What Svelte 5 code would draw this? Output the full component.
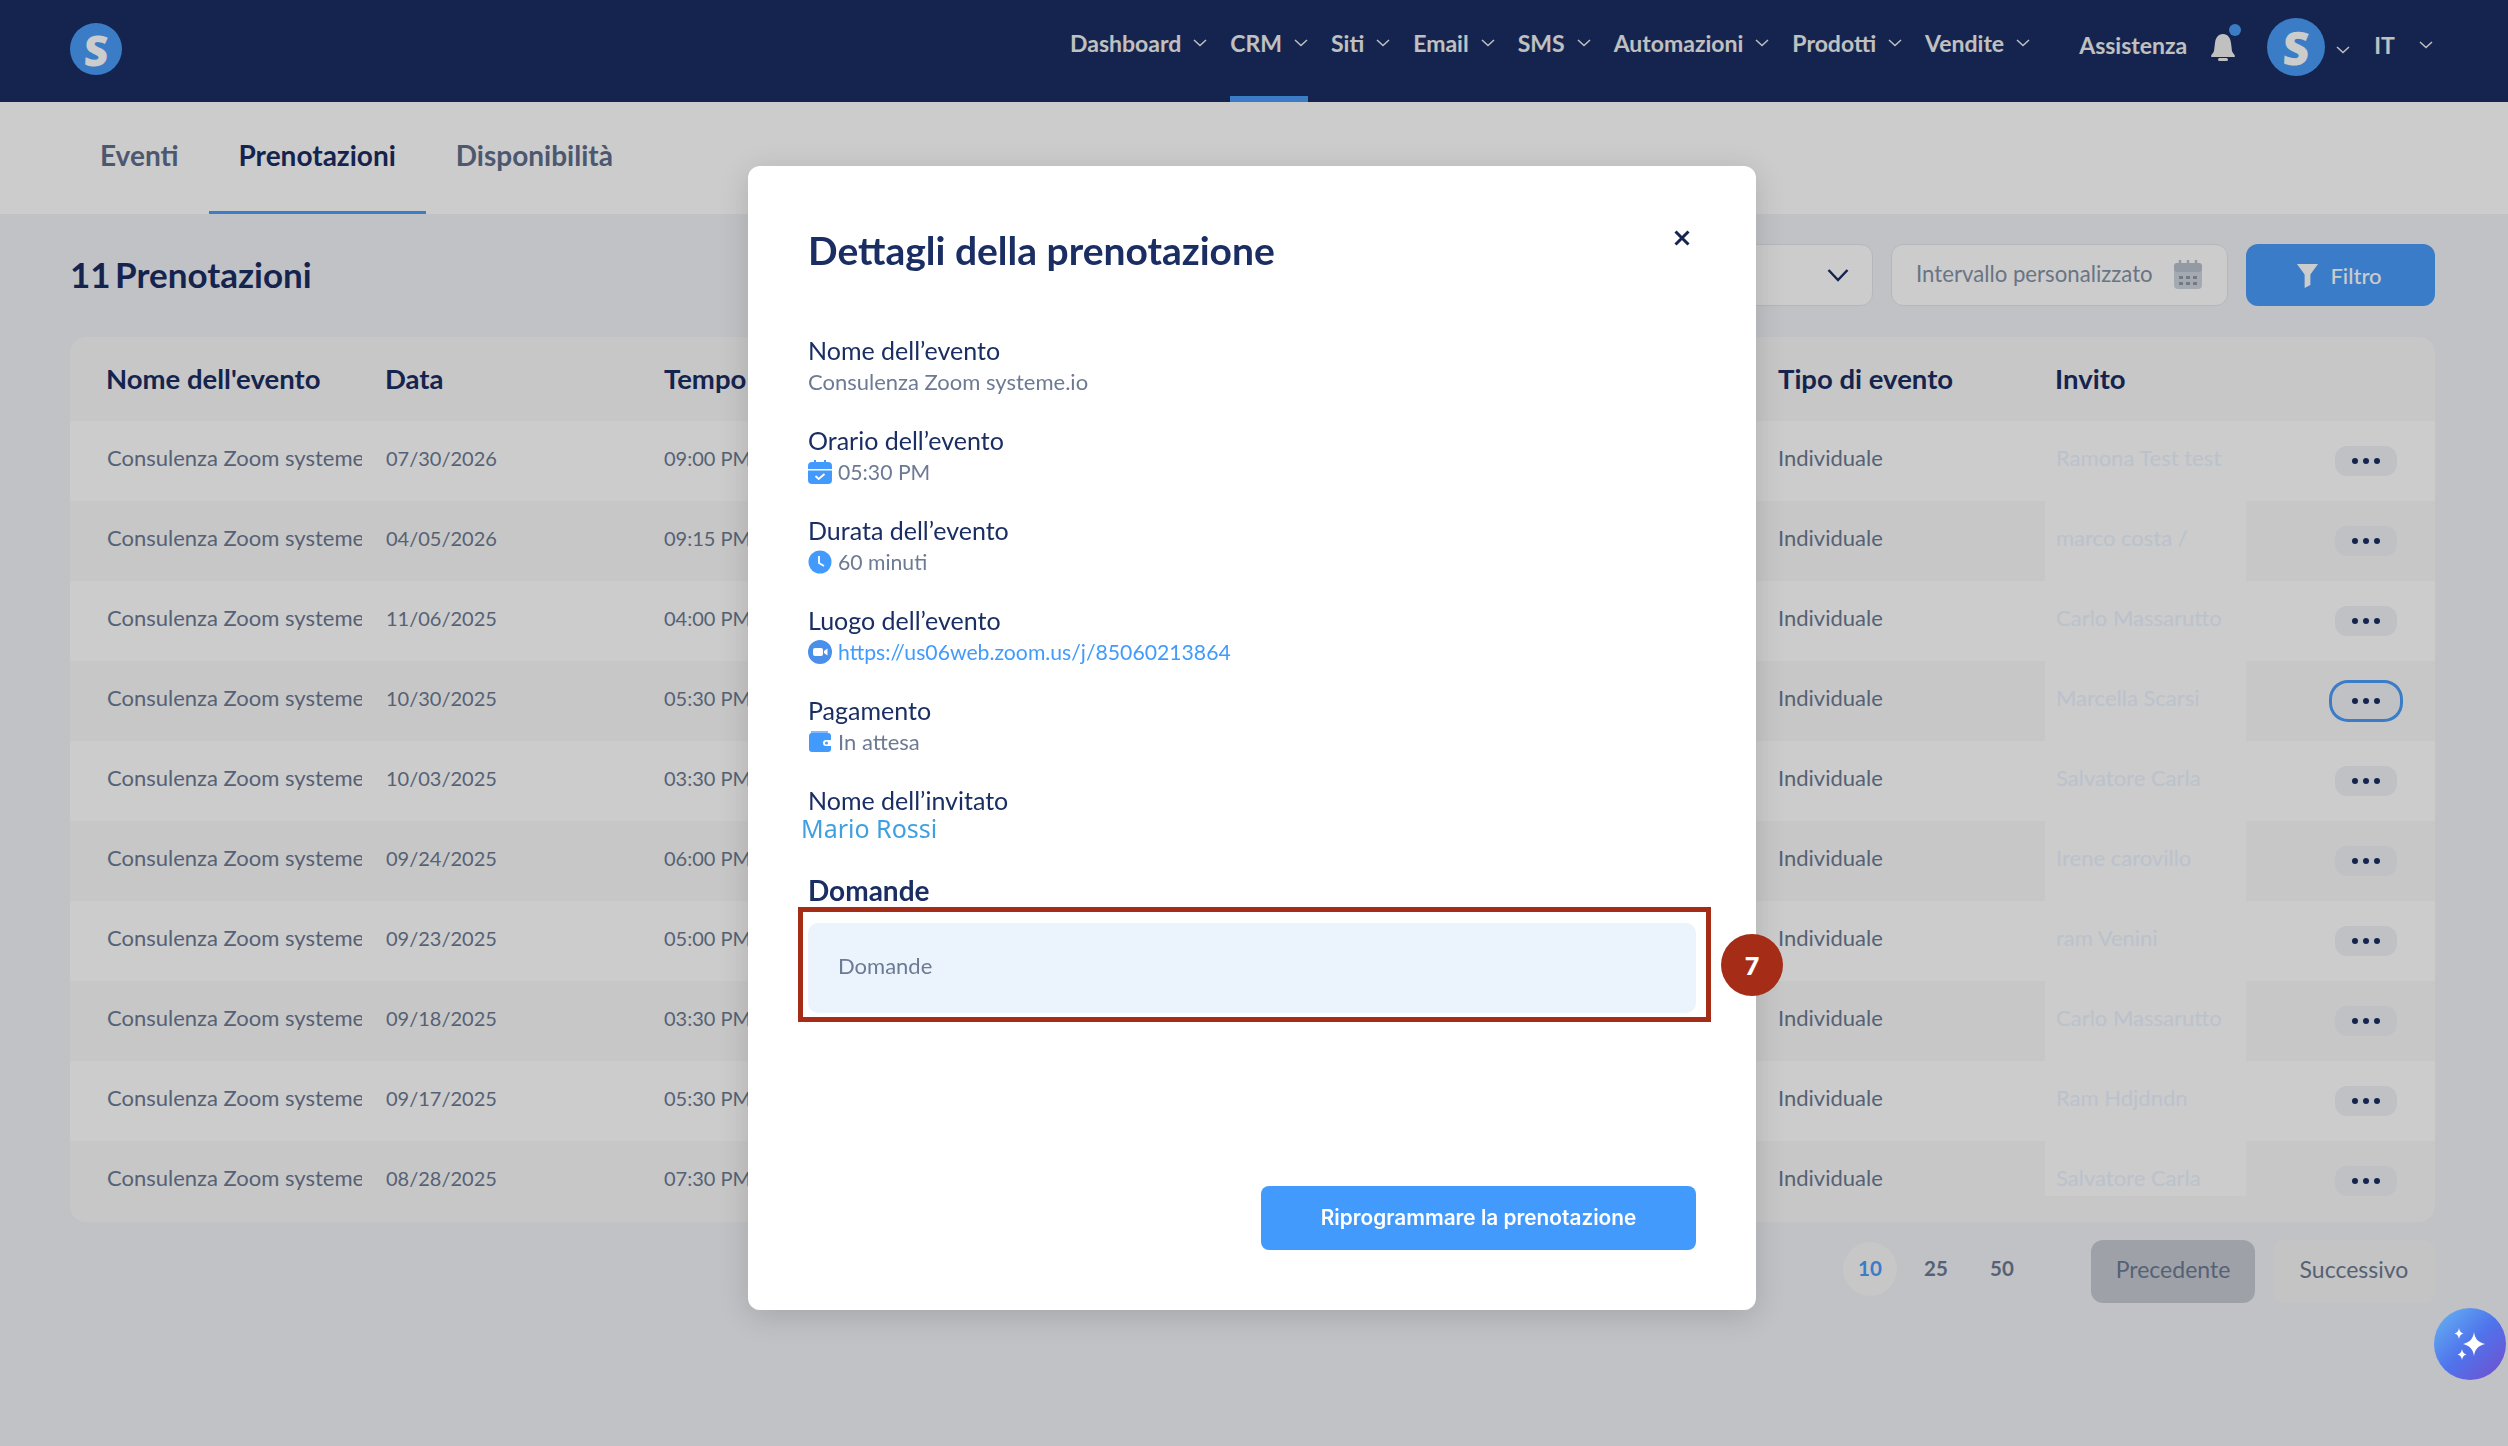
<script>
  const nav = ['Dashboard', 'CRM', 'Siti', 'Email', 'SMS', 'Automazioni', 'Prodotti', 'Vendite'];
  const rows = [
    ['07/30/2026', '09:00 PM', 'Ramona Test test'],
    ['04/05/2026', '09:15 PM', 'marco costa /'],
    ['11/06/2025', '04:00 PM', 'Carlo Massarutto'],
    ['10/30/2025', '05:30 PM', 'Marcella Scarsi'],
    ['10/03/2025', '03:30 PM', 'Salvatore Carla'],
    ['09/24/2025', '06:00 PM', 'Irene carovillo'],
    ['09/23/2025', '05:00 PM', 'ram Venini'],
    ['09/18/2025', '03:30 PM', 'Carlo Massarutto'],
    ['09/17/2025', '05:30 PM', 'Ram Hdjdndn'],
    ['08/28/2025', '07:30 PM', 'Salvatore Carla']
  ];
</script>

{#snippet chev()}
  <svg class="chev" viewBox="0 0 14 8" width="14" height="8"><path d="M1 1l6 5.5L13 1" fill="none" stroke="currentColor" stroke-width="1.5"/></svg>
{/snippet}

<div class="page">
  <header>
    <div class="logo"><span>S</span></div>
    <nav>
      {#each nav as item}
        <div class="nav-item" class:active={item === 'CRM'}>{item}{@render chev()}</div>
      {/each}
    </nav>
    <div class="help">Assistenza</div>
    <div class="bell">
      <svg viewBox="0 0 24 27" width="24" height="27"><path d="M12 0c5 0 7.500 4 8 9l1 8c.3 2 2.500 3 3 5 .2.800-.3 1-1 1H1c-.7 0-1.200-.2-1-1 .5-2 2.700-3 3-5l1-8c.5-5 3-9 8-9z" fill="#f0f0f0"/><rect x="7" y="24" width="10" height="3" rx="1.500" fill="#f0f0f0"/></svg>
      <i></i>
    </div>
    <div class="logo avatar"><span>S</span></div>
    <div class="chev-solo">{@render chev()}</div>
    <div class="lang">IT{@render chev()}</div>
  </header>

  <div class="tabs">
    <div class="tab">Eventi</div>
    <div class="tab current">Prenotazioni</div>
    <div class="tab">Disponibilità</div>
  </div>

  <main>
    <div class="toolbar">
      <h1>11 Prenotazioni</h1>
      <div class="filters">
        <div class="box select">
          <svg viewBox="0 0 22 14" width="22" height="14"><path d="M1.500 2L11 12l9.500-10" fill="none" stroke="#1a2e63" stroke-width="2.500"/></svg>
        </div>
        <div class="box range">
          <span>Intervallo personalizzato</span>
          <svg viewBox="0 0 30 30" width="30" height="30">
            <rect x="1" y="3" width="28" height="26" rx="4" fill="#cfd5de"/>
            <rect x="1" y="3" width="28" height="9" rx="3" fill="#b9c1cc"/>
            <path d="M7 0v6M15 0v6M23 0v6" stroke="#b9c1cc" stroke-width="2.500"/>
            <path d="M6 16h4v3H6zM13 16h4v3h-4zM20 16h4v3h-4zM6 22h4v3H6zM13 22h4v3h-4zM20 22h4v3h-4z" fill="#8f99a8"/>
          </svg>
        </div>
        <div class="filter-btn">
          <svg viewBox="0 0 24 26" width="23" height="25"><path d="M1 1h22l-8 11v11l-6 3V12z" fill="#fff"/></svg>
          Filtro
        </div>
      </div>
    </div>

    <div class="table">
      <div class="line head">
        <div class="cell name">Nome dell'evento</div>
        <div class="cell">Data</div>
        <div class="cell">Tempo</div>
        <div class="cell"></div>
        <div class="cell type">Tipo di evento</div>
        <div class="cell guest">Invito</div>
        <div class="cell"></div>
      </div>
      {#each rows as row, i}
        <div class="line item" class:odd={i % 2 === 0}>
          <div class="cell name">Consulenza Zoom systeme.io</div>
          <div class="cell num">{row[0]}</div>
          <div class="cell num time">{row[1]}</div>
          <div class="cell"></div>
          <div class="cell type">Individuale</div>
          <div class="cell guest" class:short={i === 9}>{row[2]}</div>
          <div class="cell act">
            <div class="dots" class:focus={i === 3}><i></i><i></i><i></i></div>
          </div>
        </div>
      {/each}
    </div>

    <div class="pager">
      <div class="size on">10</div>
      <div class="size">25</div>
      <div class="size">50</div>
      <div class="pbtn prev">Precedente</div>
      <div class="pbtn next">Successivo</div>
    </div>
  </main>
</div>

<div class="overlay"></div>

<div class="modal">
  <div class="modal-head">
    <h2>Dettagli della prenotazione</h2>
    <svg class="close" viewBox="0 0 16 16" width="16" height="16"><path d="M1.500 1.500l13 13M14.500 1.500l-13 13" stroke="#15254f" stroke-width="3"/></svg>
  </div>

  <div class="field">
    <div class="label">Nome dell’evento</div>
    <div class="value wide">Consulenza Zoom systeme.io</div>
  </div>
  <div class="field">
    <div class="label">Orario dell’evento</div>
    <div class="value">
      <svg viewBox="0 0 24 24" width="24" height="24"><path d="M6 0h2v2h8V0h2v2h2a4 4 0 0 1 4 4v3H0V6a4 4 0 0 1 4-4h2z" fill="#429bfc"/><path d="M0 10.500h24V20a4 4 0 0 1-4 4H4a4 4 0 0 1-4-4z" fill="#429bfc"/><path d="M7.500 16l3.200 3 5.800-5" fill="none" stroke="#fff" stroke-width="1.800"/></svg>
      05:30 PM
    </div>
  </div>
  <div class="field">
    <div class="label">Durata dell’evento</div>
    <div class="value">
      <svg viewBox="0 0 24 24" width="24" height="24"><circle cx="12" cy="12" r="11.500" fill="#429bfc"/><path d="M11 6v7l5 3" fill="none" stroke="#fff" stroke-width="1.800"/></svg>
      60 minuti
    </div>
  </div>
  <div class="field">
    <div class="label">Luogo dell’evento</div>
    <div class="value link">
      <svg viewBox="0 0 24 24" width="24" height="24"><circle cx="12" cy="12" r="12" fill="#4a90ea"/><rect x="5" y="8" width="10" height="8" rx="2" fill="#fff"/><path d="M16 11l3.500-2.500v7L16 13z" fill="#fff"/></svg>
      https://us06web.zoom.us/j/85060213864
    </div>
  </div>
  <div class="field">
    <div class="label">Pagamento</div>
    <div class="value wide">
      <svg viewBox="0 0 24 24" width="24" height="24"><path d="M3 1h17v3H3z" fill="#7fbcfd"/><rect x="1" y="3" width="22" height="19" rx="3" fill="#429bfc"/><path d="M23 10h-5a3 3 0 0 0 0 6h5z" fill="#fff"/><circle cx="18.500" cy="13" r="1.500" fill="#429bfc"/></svg>
      In attesa
    </div>
  </div>
  <div class="field">
    <div class="label">Nome dell’invitato</div>
    <div class="guest-name">Mario Rossi</div>
  </div>

  <div class="q-title">Domande</div>
  <div class="q-box">Domande</div>

  <div class="modal-foot">
    <div class="primary">Riprogrammare la prenotazione</div>
  </div>

  <div class="mark"></div>
  <div class="badge">7</div>
</div>

<div class="ai">
  <svg viewBox="0 0 36 36" width="36" height="36">
    <path d="M22 6c1 7 4 10 11 12-7 2-10 5-11 12-1-7-4-10-11-12 7-2 10-5 11-12z" fill="#fff"/>
    <path d="M7 2c.5 3 1.500 4.500 4.500 5.500C8.500 8.500 7.500 10 7 13c-.5-3-1.500-4.500-4.500-5.500C5.500 6.500 6.500 5 7 2z" fill="#fff"/>
    <path d="M10 23c.5 3 1.500 4.500 4.500 5.500-3 1-4 2.500-4.500 5.500-.5-3-1.500-4.500-4.500-5.500 3-1 4-2.500 4.500-5.500z" fill="#fff"/>
  </svg>
</div>

<style>
  :global(body) {
    margin: 0;
    font-family: "Lato", "Liberation Sans", sans-serif;
    background: #f0f3f7;
  }
  .page {
    width: 2508px;
    height: 1446px;
    overflow: hidden;
    background: #f0f3f7;
    color: #1a2e63;
  }
  header {
    height: 102px;
    background: #1a2e63;
    display: flex;
    align-items: center;
    padding-left: 70px;
    color: #f0f0f0;
    font-weight: 700;
    font-size: 23px;
    box-sizing: border-box;
  }
  .logo {
    width: 52px;
    height: 52px;
    border-radius: 50%;
    background: #4a9cf8;
    display: flex;
    align-items: center;
    justify-content: center;
    margin-top: -4px;
    font-family: "Open Sans", sans-serif;
    font-weight: 800;
    font-size: 42px;
    color: #fff;
  }
  .logo span {
    transform: skewX(-3deg);
  }
  nav {
    display: flex;
    margin-left: 948px;
    height: 100%;
  }
  .nav-item {
    display: flex;
    align-items: center;
    gap: 12px;
    margin-right: 23px;
    height: 100%;
    box-sizing: border-box;
    padding-bottom: 10px;
    border-bottom: 6px solid transparent;
  }
  .nav-item.active {
    border-bottom-color: #4a9cf8;
  }
  .help {
    margin-left: 26px;
    margin-top: -12px;
  }
  .bell {
    position: relative;
    margin-left: 24px;
    margin-top: -8px;
    width: 24px;
    height: 27px;
  }
  .bell i {
    position: absolute;
    top: -10px;
    right: -6px;
    width: 12px;
    height: 12px;
    border-radius: 50%;
    background: #4a9cf8;
  }
  .avatar {
    width: 58px;
    height: 58px;
    margin-left: 32px;
    margin-top: -8px;
    font-size: 46px;
  }
  .chev-solo {
    margin-left: 11px;
    margin-top: -12px;
  }
  .lang {
    margin-left: 24px;
    margin-top: -12px;
    display: flex;
    align-items: center;
    gap: 24px;
  }
  .tabs {
    height: 112px;
    background: #fff;
    display: flex;
    padding-left: 70px;
  }
  .tab {
    height: 112px;
    box-sizing: border-box;
    padding: 36px 30px 0;
    font-size: 28px;
    font-weight: 700;
    color: #5f6f8c;
    border-bottom: 3px solid transparent;
  }
  .tab.current {
    color: #1a2e63;
    border-bottom-color: #499cfa;
  }
  main {
    padding: 30px 73px 0 70px;
  }
  .toolbar {
    display: flex;
    justify-content: space-between;
    align-items: center;
    height: 62px;
  }
  h1 {
    margin: -3px 0 0;
    font-size: 35px;
    font-weight: 700;
    word-spacing: -4px;
  }
  .filters {
    display: flex;
    gap: 18px;
    height: 62px;
  }
  .box {
    box-sizing: border-box;
    border: 1.500px solid #e2e6ec;
    background: #fff;
    border-radius: 12px;
    display: flex;
    align-items: center;
  }
  .select {
    width: 300px;
    justify-content: flex-end;
    padding-right: 23px;
  }
  .range {
    width: 337px;
    justify-content: space-between;
    padding: 0 24px;
    color: #8592a6;
    font-size: 22.2px;
  }
  .range span {
    margin-top: -3px;
  }
  .filter-btn {
    width: 189px;
    background: #499cfa;
    border-radius: 12px;
    color: #fff;
    display: flex;
    align-items: center;
    justify-content: center;
    gap: 11px;
    font-size: 22px;
    font-weight: 500;
    padding-right: 3px;
    box-sizing: border-box;
  }
  .table {
    margin-top: 31px;
    background: #f9f9f9;
    border-radius: 16px;
    height: 885px;
    overflow: hidden;
  }
  .line {
    display: grid;
    grid-template-columns: 279px 279px 279px 837px 275px 201px 1fr;
    padding-left: 26px;
  }
  .cell {
    padding-left: 11px;
    white-space: nowrap;
    overflow: hidden;
  }
  .head {
    height: 82px;
    padding-bottom: 2px;
    align-items: center;
    font-size: 27.5px;
    font-weight: 700;
    color: #1a2e63;
  }
  .head .cell {
    padding-left: 10px;
    overflow: visible;
  }
  .head .type {
    padding-left: 8px;
  }
  .item {
    height: 80px;
    font-size: 22px;
    color: #6c7a93;
  }
  .item .cell {
    line-height: 74px;
  }
  .item .num {
    font-size: 20px;
  }
  .item .time {
    padding-left: 10px;
  }
  .item.odd {
    background: #fff;
  }
  .name {
    margin-right: 13px;
  }
  .item .type {
    padding-left: 8px;
  }
  .item .guest {
    background: #fff;
    color: #eaf3ff;
    padding-left: 11px;
  }
  .item .guest.short {
    height: 55px;
  }
  .act {
    display: flex;
    justify-content: flex-end;
    padding-right: 38px;
    overflow: visible;
  }
  .dots {
    width: 62px;
    height: 30px;
    margin-top: 25px;
    background: #f0f2f6;
    border-radius: 12px;
    display: flex;
    align-items: center;
    justify-content: center;
    gap: 5px;
    box-sizing: border-box;
  }
  .dots i {
    width: 6px;
    height: 6px;
    border-radius: 50%;
    background: #1a2e63;
  }
  .dots.focus {
    box-shadow: 0 0 0 2px #f0f2f6, 0 0 0 5px #499cfa;
    height: 32px;
    width: 64px;
    margin-right: -1px;
    border-radius: 14px;
    margin-top: 24px;
  }
  .pager {
    display: flex;
    align-items: center;
    justify-content: flex-end;
    margin-top: 18px;
    height: 63px;
  }
  .size {
    width: 54px;
    height: 54px;
    margin-right: 12px;
    border-radius: 50%;
    display: flex;
    align-items: center;
    justify-content: center;
    font-size: 20.5px;
    font-weight: 700;
    color: #6c7a93;
    margin-top: -6px;
    padding-bottom: 2px;
    box-sizing: border-box;
  }
  .size.on {
    background: #f9f9f9;
    color: #499cfa;
  }
  .pbtn {
    height: 63px;
    border-radius: 12px;
    display: flex;
    align-items: center;
    justify-content: center;
    font-size: 23px;
    color: #6c7a93;
    padding-bottom: 5px;
    box-sizing: border-box;
  }
  .prev {
    width: 164px;
    margin-left: 50px;
    background: #c6cbd3;
  }
  .next {
    width: 162px;
    margin-left: 18px;
    background: #f5f5f6;
  }
  .overlay {
    position: fixed;
    inset: 0;
    background: rgba(0, 0, 0, 0.2);
  }
  .modal {
    position: absolute;
    left: 748px;
    top: 166px;
    width: 1008px;
    height: 1144px;
    box-sizing: border-box;
    padding: 60px;
    background: #fff;
    border-radius: 12px;
    box-shadow: 0 6px 30px rgba(0, 0, 0, 0.15);
    display: flex;
    flex-direction: column;
    color: #1a2e63;
  }
  .modal-head {
    display: flex;
    justify-content: space-between;
    height: 90px;
  }
  h2 {
    margin: 0;
    font-size: 39px;
    line-height: 48px;
    font-weight: 700;
  }
  .close {
    margin: 4px 6px 0 0;
  }
  .field {
    height: 90px;
    flex: none;
  }
  .modal-head + .field {
    margin-top: 19px;
  }
  .label {
    font-size: 25px;
    line-height: 30px;
  }
  .value {
    margin-top: 4px;
    line-height: 26px;
    font-size: 21.2px;
    color: #6c7a93;
    display: flex;
    align-items: center;
    gap: 6px;
  }
  .value.wide {
    font-size: 22px;
  }
  .value.link {
    color: #429bfc;
  }
  .guest-name {
    font-family: "Noto Sans", sans-serif;
    font-size: 25px;
    line-height: 26px;
    margin-left: -7px;
    color: #3ea0e0;
  }
  .q-title {
    font-size: 28px;
    font-weight: 700;
    line-height: 30px;
  }
  .q-box {
    margin-top: 18px;
    height: 90px;
    flex: none;
    background: #ebf3fd;
    border-radius: 10px;
    padding-left: 30px;
    line-height: 86px;
    font-size: 22px;
    color: #6c7a93;
  }
  .modal-foot {
    margin-top: auto;
    display: flex;
    justify-content: flex-end;
  }
  .primary {
    width: 435px;
    height: 64px;
    border-radius: 8px;
    background: #429bfc;
    color: #fff;
    font-family: "Inter", sans-serif;
    font-weight: 600;
    font-size: 20.8px;
    display: flex;
    align-items: center;
    justify-content: center;
    padding-bottom: 2px;
    box-sizing: border-box;
  }
  .mark {
    position: absolute;
    left: 50px;
    top: 741px;
    width: 913px;
    height: 115px;
    box-sizing: border-box;
    border: 5px solid #a52c17;
  }
  .badge {
    position: absolute;
    left: 973px;
    top: 768px;
    width: 62px;
    height: 62px;
    border-radius: 50%;
    background: #a52c17;
    color: #fff;
    font-size: 25px;
    font-weight: 800;
    display: flex;
    align-items: center;
    justify-content: center;
  }
  .ai {
    position: absolute;
    left: 2434px;
    top: 1308px;
    width: 72px;
    height: 72px;
    border-radius: 50%;
    background: linear-gradient(135deg, #64b0f2 5%, #4f74ec 50%, #7050d0 95%);
    display: flex;
    align-items: center;
    justify-content: center;
  }
</style>
